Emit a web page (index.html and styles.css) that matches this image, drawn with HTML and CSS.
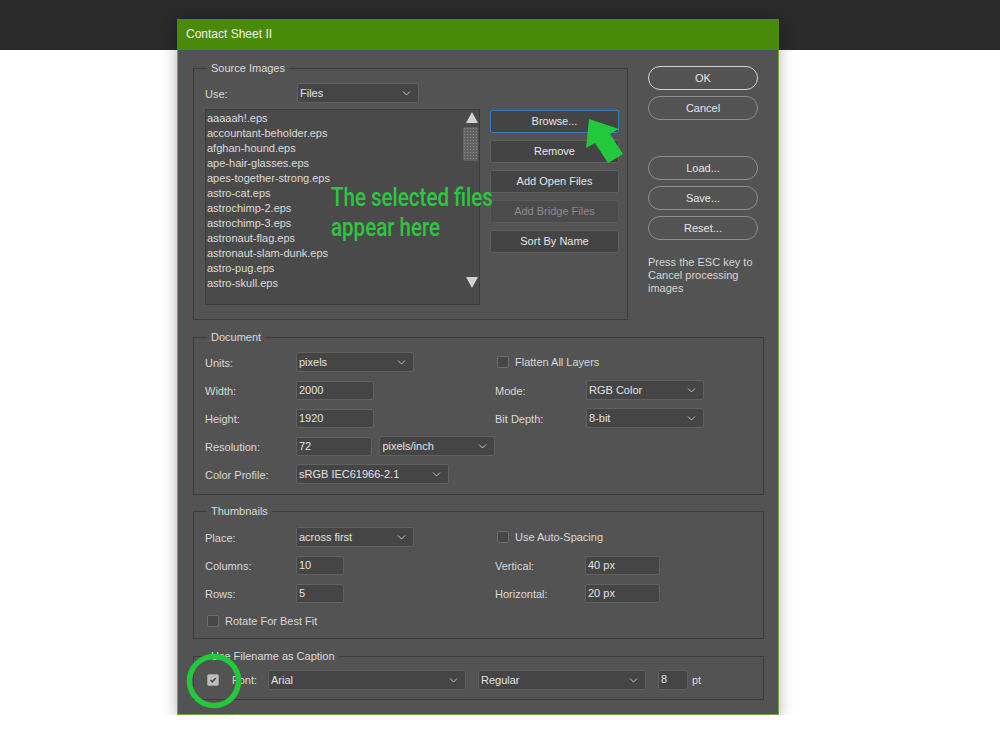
FILE: index.html
```html
<!DOCTYPE html>
<html lang="en">
<head>
    <meta charset="UTF-8" />
    <title>Contact Sheet II</title>
    <link rel="stylesheet" href="styles.css">
</head>
<body>
    <div class="topbar"></div>
    <div class="dialog">
        <div class="titlebar">Contact Sheet II</div>
        <div class="dialog-body">
            <div class="top-row">
                <fieldset class="group source">
                    <legend>Source Images</legend>
                    <div class="row">
                        <span class="lbl use-lbl">Use:</span>
                        <div class="select w-files">Files<svg class="chev" viewBox="0 0 9 5"><path d="M1 0.5l3.5 3.5L8 0.5"/></svg></div>
                    </div>
                    <div class="list-row">
                        <div class="file-list">
                            <div class="items">
                                <div>aaaaah!.eps</div>
                                <div>accountant-beholder.eps</div>
                                <div>afghan-hound.eps</div>
                                <div>ape-hair-glasses.eps</div>
                                <div>apes-together-strong.eps</div>
                                <div>astro-cat.eps</div>
                                <div>astrochimp-2.eps</div>
                                <div>astrochimp-3.eps</div>
                                <div>astronaut-flag.eps</div>
                                <div>astronaut-slam-dunk.eps</div>
                                <div>astro-pug.eps</div>
                                <div>astro-skull.eps</div>
                            </div>
                            <div class="scrollbar">
                                <svg class="arrow" viewBox="0 0 12 11"><path d="M6 0L12 11H0z"/></svg>
                                <div class="thumb"></div>
                                <svg class="arrow down" viewBox="0 0 12 11"><path d="M0 0H12L6 11z"/></svg>
                            </div>
                        </div>
                        <div class="btn-col">
                            <div class="btn focus">Browse...</div>
                            <div class="btn">Remove</div>
                            <div class="btn">Add Open Files</div>
                            <div class="btn disabled">Add Bridge Files</div>
                            <div class="btn">Sort By Name</div>
                        </div>
                    </div>
                </fieldset>
                <div class="side">
                    <div class="pill primary">OK</div>
                    <div class="pill">Cancel</div>
                    <div class="pill spaced">Load...</div>
                    <div class="pill">Save...</div>
                    <div class="pill">Reset...</div>
                    <p class="hint">Press the ESC key to Cancel processing images</p>
                </div>
            </div>

            <fieldset class="group wide">
                <legend>Document</legend>
                <div class="cols">
                    <div class="col left">
                        <div class="row"><span class="lbl">Units:</span><div class="select w-118">pixels<svg class="chev" viewBox="0 0 9 5"><path d="M1 0.5l3.5 3.5L8 0.5"/></svg></div></div>
                        <div class="row"><span class="lbl">Width:</span><div class="input w-78">2000</div></div>
                        <div class="row"><span class="lbl">Height:</span><div class="input w-78">1920</div></div>
                        <div class="row"><span class="lbl">Resolution:</span><div class="input w-78">72</div><div class="select w-118 unit">pixels/inch<svg class="chev" viewBox="0 0 9 5"><path d="M1 0.5l3.5 3.5L8 0.5"/></svg></div></div>
                        <div class="row"><span class="lbl">Color Profile:</span><div class="select w-153">sRGB IEC61966-2.1<svg class="chev" viewBox="0 0 9 5"><path d="M1 0.5l3.5 3.5L8 0.5"/></svg></div></div>
                    </div>
                    <div class="col right">
                        <div class="row"><span class="check"></span><span class="check-lbl">Flatten All Layers</span></div>
                        <div class="row"><span class="lbl">Mode:</span><div class="select w-118">RGB Color<svg class="chev" viewBox="0 0 9 5"><path d="M1 0.5l3.5 3.5L8 0.5"/></svg></div></div>
                        <div class="row"><span class="lbl">Bit Depth:</span><div class="select w-118">8-bit<svg class="chev" viewBox="0 0 9 5"><path d="M1 0.5l3.5 3.5L8 0.5"/></svg></div></div>
                    </div>
                </div>
            </fieldset>

            <fieldset class="group wide thumbs">
                <legend>Thumbnails</legend>
                <div class="cols">
                    <div class="col left">
                        <div class="row"><span class="lbl">Place:</span><div class="select w-118">across first<svg class="chev" viewBox="0 0 9 5"><path d="M1 0.5l3.5 3.5L8 0.5"/></svg></div></div>
                        <div class="row"><span class="lbl">Columns:</span><div class="input w-48">10</div></div>
                        <div class="row"><span class="lbl">Rows:</span><div class="input w-48">5</div></div>
                        <div class="row"><span class="check"></span><span class="check-lbl">Rotate For Best Fit</span></div>
                    </div>
                    <div class="col right">
                        <div class="row"><span class="check"></span><span class="check-lbl">Use Auto-Spacing</span></div>
                        <div class="row"><span class="lbl short">Vertical:</span><div class="input w-75">40 px</div></div>
                        <div class="row"><span class="lbl short">Horizontal:</span><div class="input w-75">20 px</div></div>
                    </div>
                </div>
            </fieldset>

            <fieldset class="group wide caption">
                <legend>Use Filename as Caption</legend>
                <div class="row">
                    <span class="check checked"><svg viewBox="0 0 12 12"><path d="M3 6l2.2 2.2L9.2 3.8"/></svg></span>
                    <span class="font-lbl">Font:</span>
                    <div class="select w-198">Arial<svg class="chev" viewBox="0 0 9 5"><path d="M1 0.5l3.5 3.5L8 0.5"/></svg></div>
                    <div class="select w-167">Regular<svg class="chev" viewBox="0 0 9 5"><path d="M1 0.5l3.5 3.5L8 0.5"/></svg></div>
                    <div class="input w-30">8</div>
                    <span class="pt">pt</span>
                </div>
            </fieldset>
        </div>

        <!-- tutorial annotations drawn over the dialog -->
        <div class="note">The selected files<br>appear here</div>
        <svg class="pointer" viewBox="580 115 50 55"><polygon points="588,119 585,148 594,143 607,163 622,154 609,134 618,129"/></svg>
        <svg class="ring" viewBox="183 651 60 60"><circle cx="213" cy="681" r="24.5"/></svg>
    </div>
</body>
</html>
```

FILE: styles.css
```css
body {
    margin: 0;
    background: #ffffff;
    font-family: "Liberation Sans", Arial, sans-serif;
    font-size: 11px;
    color: #d8d8d8;
}
.topbar {
    height: 50px;
    background: #2a2a2a;
}
.dialog {
    position: relative;
    box-sizing: border-box;
    width: 602px;
    margin: -31px 0 0 177px;
    background: #535353;
    border: 1px solid #6fa832;
    border-top: 0;
    box-shadow: 0 3px 14px rgba(0, 0, 0, 0.3);
}
.titlebar {
    height: 31px;
    margin: 0 -1px;
    padding-left: 9px;
    background: #4a8a0a;
    color: #eef2e8;
    font-size: 12px;
    line-height: 31px;
}
.dialog-body {
    padding: 12px 14px 14px 15px;
}
.top-row {
    display: flex;
    align-items: flex-start;
}
.group {
    box-sizing: border-box;
    min-width: 0;
    margin: 0;
    padding: 8px 7px 14px 11px;
    border: 1px solid #3c3c3c;
}
.group legend {
    margin-left: 2px;
    padding: 0 4px;
    line-height: 13px;
    color: #dadada;
}
.source {
    width: 435px;
}
.wide {
    width: 571px;
    margin-top: 11px;
    padding-bottom: 10px;
}
.thumbs {
    margin-top: 10px;
    padding: 9px 7px 7px 11px;
}
.caption {
    padding: 7px 7px 9px 11px;
}
.row {
    display: flex;
    align-items: center;
    height: 20px;
}
.lbl {
    width: 91px;
    flex: none;
    padding-top: 2px;
}
.use-lbl {
    width: 92px;
}
.lbl.short {
    width: 90px;
}
.select,
.input {
    box-sizing: border-box;
    position: relative;
    height: 20px;
    padding-left: 2px;
    background: #454545;
    border: 1px solid #616161;
    border-radius: 2px;
    color: #e2e2e2;
    line-height: 19px;
    white-space: nowrap;
}
.input {
    height: 19px;
    line-height: 16px;
}
.chev {
    position: absolute;
    right: 7px;
    top: 7px;
    width: 9px;
    height: 5px;
    fill: none;
    stroke: #c2c2c2;
    stroke-width: 1;
}
.w-files { width: 122px; }
.w-118 { width: 118px; }
.w-153 { width: 153px; }
.w-198 { width: 198px; }
.w-167 { width: 168px; margin-left: 12px; }
.w-78 { width: 78px; }
.w-48 { width: 48px; }
.w-75 { width: 75px; }
.w-30 { width: 30px; margin-left: 12px; height: 20px; }
.unit { margin-left: 7px; }
.list-row {
    display: flex;
    align-items: flex-start;
    gap: 10px;
    margin-top: 6px;
}
.file-list {
    box-sizing: border-box;
    display: flex;
    width: 275px;
    height: 196px;
    background: #4a4a4a;
    border: 1px solid #3b3b3b;
}
.items {
    flex: 1;
    padding: 1px 0 0 1px;
    line-height: 15px;
    color: #dcdcdc;
}
.scrollbar {
    display: flex;
    flex-direction: column;
    align-items: flex-end;
    width: 17px;
    padding: 2px 1px 16px 0;
}
.arrow {
    width: 12px;
    height: 11px;
    fill: #d2d2d2;
}
.arrow.down {
    margin-top: auto;
}
.thumb {
    width: 15px;
    height: 34px;
    margin-top: 4px;
    border-radius: 2px;
    background-color: #626262;
    background-image: radial-gradient(#8a8a8a 0.6px, transparent 0.9px);
    background-size: 3px 3px;
}
.btn-col {
    display: flex;
    flex-direction: column;
    gap: 7px;
    width: 129px;
    margin-top: 1px;
}
.btn {
    box-sizing: border-box;
    height: 23px;
    background: #444444;
    border: 1px solid #5f5f5f;
    border-radius: 2px;
    text-align: center;
    line-height: 21px;
    color: #e6e6e6;
}
.btn.focus {
    border-color: #3b77c6;
}
.btn.disabled {
    background: #4b4b4b;
    border-color: #595959;
    color: #8c8c8c;
}
.side {
    width: 110px;
    margin-left: 20px;
    padding-top: 4px;
}
.pill {
    box-sizing: border-box;
    height: 24px;
    margin-bottom: 6px;
    border: 1px solid #8e8e8e;
    border-radius: 12px;
    text-align: center;
    line-height: 22px;
    color: #e6e6e6;
}
.pill.primary {
    border-color: #d4d4d4;
}
.pill.spaced {
    margin-top: 36px;
}
.hint {
    margin: 16px 0 0;
    line-height: 13px;
    color: #d6d6d6;
}
.cols {
    display: flex;
}
.col {
    display: flex;
    flex-direction: column;
    gap: 8px;
}
.col.left {
    width: 290px;
}
.check {
    box-sizing: border-box;
    flex: none;
    width: 12px;
    height: 12px;
    margin-left: 2px;
    background: #474747;
    border: 1px solid #6c6c6c;
    border-radius: 2px;
}
.check-lbl {
    margin-left: 6px;
}
.check.checked {
    background: #bdbdbd;
    border-color: #9c9c9c;
}
.check.checked svg {
    display: block;
    width: 10px;
    height: 10px;
    fill: none;
    stroke: #4a4a4a;
    stroke-width: 1.8;
}
.font-lbl {
    width: 36px;
    margin-left: 13px;
}
.pt {
    margin-left: 4px;
}
.note {
    position: absolute;
    left: 153px;
    top: 163px;
    font-family: Roboto, "Liberation Sans", sans-serif;
    font-size: 26px;
    font-weight: 500;
    line-height: 30px;
    color: #2dc640;
    white-space: nowrap;
    transform: scaleX(0.79);
    transform-origin: left top;
}
.pointer {
    position: absolute;
    left: 403px;
    top: 96px;
    width: 50px;
    height: 55px;
    fill: #22c93c;
}
.ring {
    position: absolute;
    left: 6px;
    top: 632px;
    width: 60px;
    height: 60px;
    fill: none;
    stroke: #22c93a;
    stroke-width: 5.5;
}
```
